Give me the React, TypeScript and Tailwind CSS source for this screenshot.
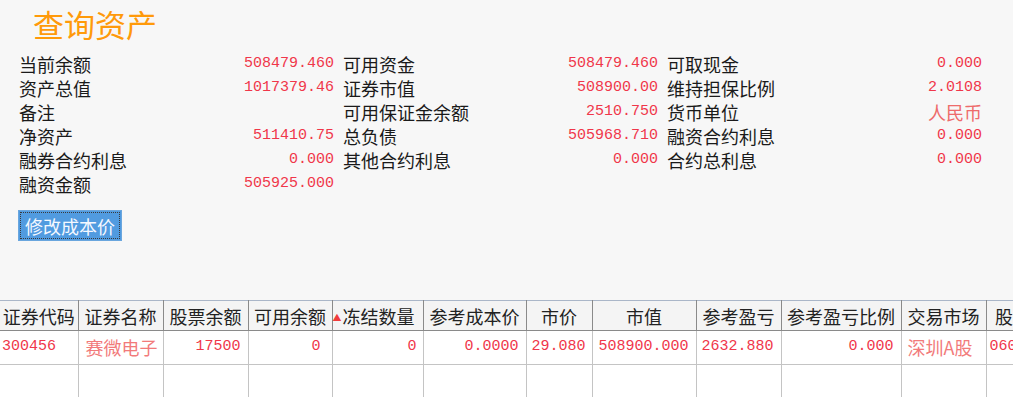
import React from "react";

const cjk = "font-['Noto_Sans_CJK_SC',sans-serif]";
const mono = "font-['Liberation_Mono','Noto_Sans_CJK_SC',monospace]";

type Item = { label: string; value: string; cjkValue?: boolean };

const summary: Item[] = [
  { label: "当前余额", value: "508479.460" },
  { label: "可用资金", value: "508479.460" },
  { label: "可取现金", value: "0.000" },
  { label: "资产总值", value: "1017379.46" },
  { label: "证券市值", value: "508900.00" },
  { label: "维持担保比例", value: "2.0108" },
  { label: "备注", value: "" },
  { label: "可用保证金余额", value: "2510.750" },
  { label: "货币单位", value: "人民币", cjkValue: true },
  { label: "净资产", value: "511410.75" },
  { label: "总负债", value: "505968.710" },
  { label: "融资合约利息", value: "0.000" },
  { label: "融券合约利息", value: "0.000" },
  { label: "其他合约利息", value: "0.000" },
  { label: "合约总利息", value: "0.000" },
  { label: "融资金额", value: "505925.000" },
];

type Col = { title: string; width: number; value: string; align: "left" | "right"; kind: "mono" | "name"; pad: string; sort?: boolean };

const columns: Col[] = [
  { title: "证券代码", width: 78, value: "300456", align: "left", kind: "mono", pad: "pl-[2px]" },
  { title: "证券名称", width: 85, value: "赛微电子", align: "left", kind: "name", pad: "pl-[7px]" },
  { title: "股票余额", width: 85, value: "17500", align: "right", kind: "mono", pad: "pr-[7px]" },
  { title: "可用余额", width: 84, value: "0", align: "right", kind: "mono", pad: "pr-[11px]" },
  { title: "冻结数量", width: 91, value: "0", align: "right", kind: "mono", pad: "pr-[6px]", sort: true },
  { title: "参考成本价", width: 103, value: "0.0000", align: "right", kind: "mono", pad: "pr-[7px]" },
  { title: "市价", width: 66, value: "29.080", align: "right", kind: "mono", pad: "pr-[6px]" },
  { title: "市值", width: 104, value: "508900.000", align: "right", kind: "mono", pad: "pr-[7px]" },
  { title: "参考盈亏", width: 85, value: "2632.880", align: "right", kind: "mono", pad: "pr-[7px]" },
  { title: "参考盈亏比例", width: 120, value: "0.000", align: "right", kind: "mono", pad: "pr-[7px]" },
  { title: "交易市场", width: 85, value: "深圳A股", align: "left", kind: "name", pad: "pl-[6px]" },
  { title: "股东代码", width: 90, value: "0602783514", align: "left", kind: "mono", pad: "pl-[3px]" },
];

function SummaryCell({ item }: { item: Item }) {
  return (
    <div className="flex h-[24px] items-center justify-between">
      <span className={`${cjk} text-[18px] leading-[24px] text-[#1a1a1a]`}>{item.label}</span>
      <span
        className={
          item.cjkValue
            ? `${cjk} text-[18px] leading-[24px] text-[#ee6b6b]`
            : `${mono} text-[15px] leading-[24px] text-[#f0364a]`
        }
      >
        {item.value}
      </span>
    </div>
  );
}

export default function App() {
  return (
    <div className="h-[397px] w-[1013px] overflow-hidden bg-[#f7f7f7]">
      {/* title */}
      <div className={`${cjk} h-[52px] pl-[33px] pt-[5px] text-[31px] leading-[38px] text-[#ff9a0a]`}>查询资产</div>

      {/* summary grid */}
      <div className="grid grid-cols-[315px_315px_315px] gap-x-[9px] pl-[19px]">
        {summary.map((item, i) => (
          <SummaryCell key={i} item={item} />
        ))}
      </div>

      <div className="pl-[18px] pt-[14px]">
        <button className="h-[31px] w-[104px] border border-[#6aa6de] bg-[#519be0] p-[1px]">
          <div className={`${cjk} flex h-full w-full items-center justify-center border border-dotted border-[#3a3a3a] text-[18px] leading-none text-[#f4f8ff]`}>
            修改成本价
          </div>
        </button>
      </div>

      {/* positions table */}
      <div className="mt-[59px] w-full overflow-hidden">
        <table className="table-fixed border-collapse" style={{ width: columns.reduce((s, c) => s + c.width, 0) }}>
          <colgroup>
            {columns.map((c) => (
              <col key={c.title} style={{ width: c.width }} />
            ))}
          </colgroup>
          <thead>
            <tr className="h-[30px] border-t border-[#aab6c8] bg-[#f4f4f4]">
              {columns.map((c) => (
                <th
                  key={c.title}
                  className={`${cjk} whitespace-nowrap border-b border-r border-b-[#8a8a8a] border-r-[#8a8a8a] p-0 text-[18px] font-normal leading-[28px] text-[#222] ${
                    c.sort ? "text-left" : "text-center"
                  }`}
                >
                  {c.sort && <span className="mr-[1px] inline-block align-[3px] text-[9px] leading-none text-[#f03c3c]">▲</span>}
                  {c.title}
                </th>
              ))}
            </tr>
          </thead>
          <tbody className="bg-white">
            <tr className="h-[34px]">
              {columns.map((c) => (
                <td
                  key={c.title}
                  className={`whitespace-nowrap border-b border-r border-[#c4c4c4] p-0 ${c.pad} ${
                    c.align === "right" ? "text-right" : "text-left"
                  } ${
                    c.kind === "name"
                      ? `${cjk} text-[18px] text-[#f27a7a]`
                      : `${mono} text-[15px] text-[#f0364a]`
                  }`}
                >
                  {c.value}
                </td>
              ))}
            </tr>
            <tr className="h-[34px]">
              {columns.map((c) => (
                <td key={c.title} className="border-b border-r border-[#c4c4c4] p-0" />
              ))}
            </tr>
          </tbody>
        </table>
      </div>
    </div>
  );
}
